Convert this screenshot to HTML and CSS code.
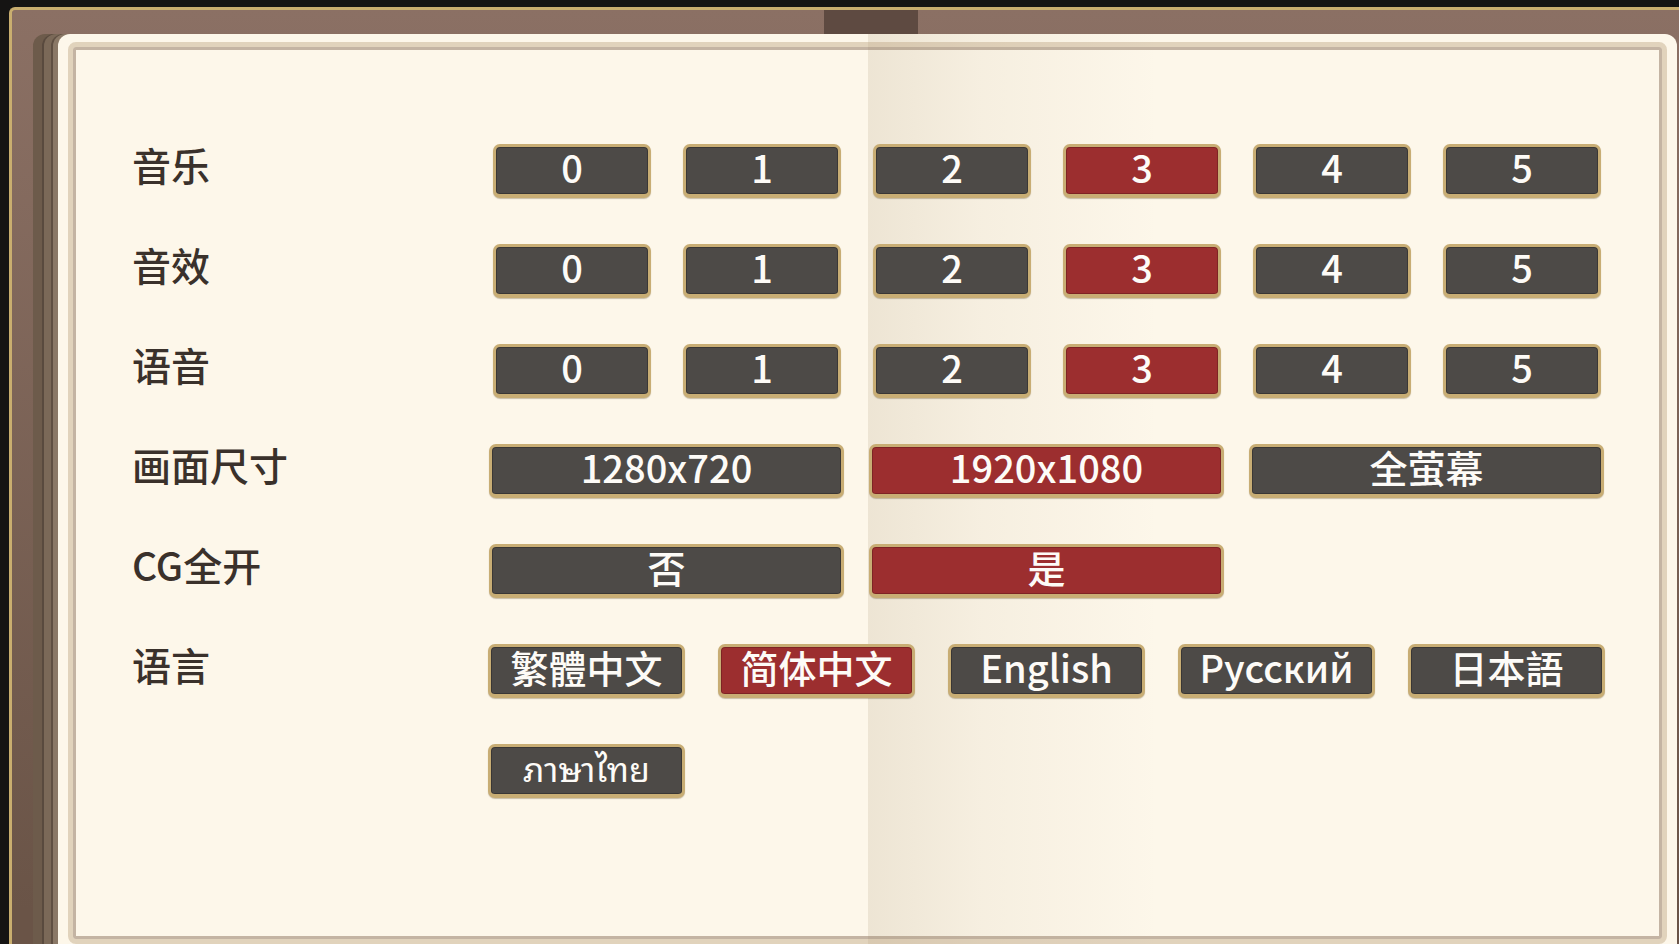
FILE: index.html
```html
<!DOCTYPE html>
<html lang="zh-CN">
<head>
    <meta charset="UTF-8">
    <meta name="viewport" content="width=device-width, initial-scale=1.0">
    <title>设置</title>
    <link rel="stylesheet" href="styles.css">
</head>
<body>
    <div class="cover">
        <div class="paper">
            <div class="frame">
                <div class="settings">
                    <div class="row">
                        <div class="label">音乐</div>
                        <div class="opts six">
                            <button class="opt">0</button>
                            <button class="opt">1</button>
                            <button class="opt">2</button>
                            <button class="opt on">3</button>
                            <button class="opt">4</button>
                            <button class="opt">5</button>
                        </div>
                    </div>
                    <div class="row">
                        <div class="label">音效</div>
                        <div class="opts six">
                            <button class="opt">0</button>
                            <button class="opt">1</button>
                            <button class="opt">2</button>
                            <button class="opt on">3</button>
                            <button class="opt">4</button>
                            <button class="opt">5</button>
                        </div>
                    </div>
                    <div class="row">
                        <div class="label">语音</div>
                        <div class="opts six">
                            <button class="opt">0</button>
                            <button class="opt">1</button>
                            <button class="opt">2</button>
                            <button class="opt on">3</button>
                            <button class="opt">4</button>
                            <button class="opt">5</button>
                        </div>
                    </div>
                    <div class="row">
                        <div class="label">画面尺寸</div>
                        <div class="opts three">
                            <button class="opt">1280x720</button>
                            <button class="opt on">1920x1080</button>
                            <button class="opt">全萤幕</button>
                        </div>
                    </div>
                    <div class="row">
                        <div class="label">CG全开</div>
                        <div class="opts three">
                            <button class="opt">否</button>
                            <button class="opt on">是</button>
                        </div>
                    </div>
                    <div class="row">
                        <div class="label">语言</div>
                        <div class="opts five">
                            <button class="opt">繁體中文</button>
                            <button class="opt on">简体中文</button>
                            <button class="opt">English</button>
                            <button class="opt">Русский</button>
                            <button class="opt">日本語</button>
                            <button class="opt thai">ภาษาไทย</button>
                        </div>
                    </div>
                </div>
            </div>
        </div>
    </div>

    <script>
        // one choice per row
        document.querySelectorAll('.opts').forEach(function (group) {
            group.addEventListener('click', function (e) {
                const btn = e.target.closest('.opt');
                if (!btn) return;
                group.querySelectorAll('.opt').forEach(function (b) {
                    b.classList.remove('on');
                });
                btn.classList.add('on');
            });
        });
    </script>
</body>
</html>
```

FILE: styles.css
```css
html, body {
    margin: 0;
    height: 100%;
    overflow: hidden;
}
body {
    background: #151413;
    font-family: "Noto Sans CJK SC", "Noto Sans", sans-serif;
}
.cover {
    margin: 7px 0 0 9px;
    height: 910px;
    padding: 24px 0 0 21px;
    border-top: 3px solid #c9ae6f;
    border-left: 3px solid #c9ae6f;
    border-top-left-radius: 6px;
    background:
        linear-gradient(to right, transparent 812px, #5e4a41 812px, #5e4a41 906px, transparent 906px) top left / 100% 24px no-repeat,
        linear-gradient(to bottom, #8b7064, #6a5447 900px);
}
.paper {
    margin-left: 25px;
    width: 1619px;
    height: 910px;
    box-sizing: border-box;
    padding: 8px 10px 0 10px;
    border-radius: 12px 12px 0 0;
    background:
        linear-gradient(to right, transparent 810px, rgba(160, 139, 103, 0.17) 810px, rgba(160, 139, 103, 0.08) 920px, rgba(160, 139, 103, 0) 1100px),
        #fdf7ea;
    box-shadow:
        -5px 0 0 #8a7866,
        -7px 0 0 #5f4f42,
        -14px 0 0 #7b6958,
        -16px 0 0 #594a3e,
        -25px 0 0 #6d5b4b;
}
.frame {
    height: 902px;
    box-sizing: border-box;
    border: 5px solid rgba(190, 166, 132, 0.45);
    border-radius: 8px;
    box-shadow: inset 0 0 0 3px rgba(150, 126, 104, 0.55);
    padding: 3px;
}
.settings {
    padding: 94px 0 0 56px;
    display: flex;
    flex-direction: column;
    gap: 46px;
}
.row {
    display: grid;
    grid-template-columns: 356px 1fr;
    align-items: start;
}
.label {
    height: 54px;
    box-sizing: border-box;
    padding-bottom: 14px;
    display: flex;
    align-items: center;
    font-size: 39px;
    font-weight: 500;
    color: #3a312b;
}
.opts {
    display: grid;
    row-gap: 46px;
}
.opts.six {
    grid-template-columns: repeat(6, 158px);
    column-gap: 32px;
    padding-left: 5px;
}
.opts.three {
    grid-template-columns: repeat(3, 355px);
    column-gap: 25px;
    padding-left: 1px;
}
.opts.five {
    grid-template-columns: repeat(5, 197px);
    column-gap: 33px;
}
.opt {
    height: 54px;
    box-sizing: border-box;
    padding: 0 0 7px;
    margin: 0;
    display: flex;
    align-items: center;
    justify-content: center;
    border: 3px solid #c8ad74;
    border-bottom-width: 4px;
    border-radius: 7px;
    background: #4d4a47;
    box-shadow: inset 0 0 0 1px #3a3735, 0 1px 1px rgba(110, 85, 50, 0.35);
    color: #fdfbf7;
    font-family: "Noto Sans CJK SC", "Noto Sans", sans-serif;
    font-size: 38px;
    font-weight: 500;
    line-height: 1;
    cursor: pointer;
}
.opt.on {
    background: #9c2e2f;
    box-shadow: inset 0 0 0 1px #7e2324, 0 1px 1px rgba(110, 85, 50, 0.35);
}
.opt.thai {
    font-family: "Noto Sans Thai Looped", "Noto Serif Thai", "Noto Sans Thai", "Noto Sans CJK SC", sans-serif;
    font-size: 34px;
    font-weight: 400;
}
```
